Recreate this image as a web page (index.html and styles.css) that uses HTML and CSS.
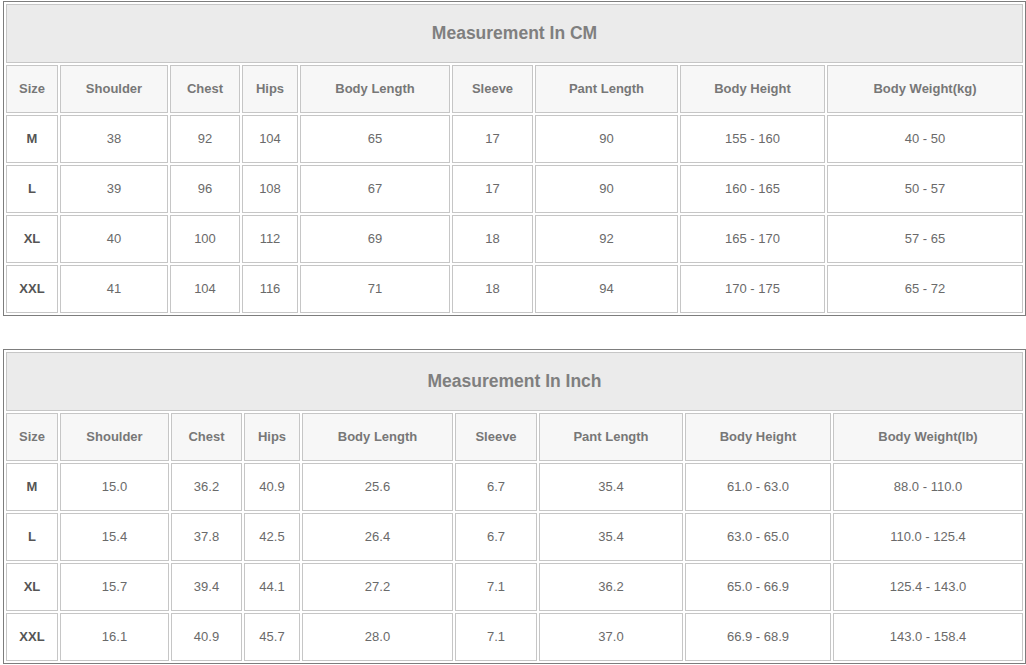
FILE: index.html
```html
<!DOCTYPE html>
<html>
<head>
<meta charset="utf-8">
<title>Size Chart</title>
<link rel="stylesheet" href="styles.css">
</head>
<body>
<div class="chart chart-cm" role="table">
  <div class="title" role="row">Measurement In CM</div>
  <div class="th">Size</div><div class="th">Shoulder</div><div class="th">Chest</div><div class="th">Hips</div><div class="th">Body Length</div><div class="th">Sleeve</div><div class="th">Pant Length</div><div class="th">Body Height</div><div class="th">Body Weight(kg)</div>
  <div class="td size">M</div><div class="td">38</div><div class="td">92</div><div class="td">104</div><div class="td">65</div><div class="td">17</div><div class="td">90</div><div class="td">155 - 160</div><div class="td">40 - 50</div>
  <div class="td size">L</div><div class="td">39</div><div class="td">96</div><div class="td">108</div><div class="td">67</div><div class="td">17</div><div class="td">90</div><div class="td">160 - 165</div><div class="td">50 - 57</div>
  <div class="td size">XL</div><div class="td">40</div><div class="td">100</div><div class="td">112</div><div class="td">69</div><div class="td">18</div><div class="td">92</div><div class="td">165 - 170</div><div class="td">57 - 65</div>
  <div class="td size">XXL</div><div class="td">41</div><div class="td">104</div><div class="td">116</div><div class="td">71</div><div class="td">18</div><div class="td">94</div><div class="td">170 - 175</div><div class="td">65 - 72</div>
</div>
<div class="chart chart-inch" role="table">
  <div class="title" role="row">Measurement In Inch</div>
  <div class="th">Size</div><div class="th">Shoulder</div><div class="th">Chest</div><div class="th">Hips</div><div class="th">Body Length</div><div class="th">Sleeve</div><div class="th">Pant Length</div><div class="th">Body Height</div><div class="th">Body Weight(lb)</div>
  <div class="td size">M</div><div class="td">15.0</div><div class="td">36.2</div><div class="td">40.9</div><div class="td">25.6</div><div class="td">6.7</div><div class="td">35.4</div><div class="td">61.0 - 63.0</div><div class="td">88.0 - 110.0</div>
  <div class="td size">L</div><div class="td">15.4</div><div class="td">37.8</div><div class="td">42.5</div><div class="td">26.4</div><div class="td">6.7</div><div class="td">35.4</div><div class="td">63.0 - 65.0</div><div class="td">110.0 - 125.4</div>
  <div class="td size">XL</div><div class="td">15.7</div><div class="td">39.4</div><div class="td">44.1</div><div class="td">27.2</div><div class="td">7.1</div><div class="td">36.2</div><div class="td">65.0 - 66.9</div><div class="td">125.4 - 143.0</div>
  <div class="td size">XXL</div><div class="td">16.1</div><div class="td">40.9</div><div class="td">45.7</div><div class="td">28.0</div><div class="td">7.1</div><div class="td">37.0</div><div class="td">66.9 - 68.9</div><div class="td">143.0 - 158.4</div>
</div>
</body>
</html>
```

FILE: styles.css
```css
html, body {
  margin: 0;
  padding: 0;
  background: #ffffff;
}

body {
  font-family: "Liberation Sans", Arial, sans-serif;
  font-size: 13px;
  color: #666666;
}

.chart {
  box-sizing: border-box;
  width: 1023px;
  margin: 1px 0 0 3px;
  border: 1px solid #7d7d7d;
  padding: 2px;
  display: grid;
  gap: 2px;
  grid-template-rows: 59px repeat(5, 48px);
}

.chart-cm {
  grid-template-columns: 52px 108px 70px 56px 150px 81px 143px 145px 196px;
}

.chart-inch {
  margin-top: 33px;
  grid-template-columns: 52px 109px 71px 56px 151px 82px 144px 146px 190px;
}

.title,
.th,
.td {
  box-sizing: border-box;
  border: 1px solid #c6c6c6;
  display: flex;
  align-items: center;
  justify-content: center;
  white-space: nowrap;
}

.th,
.td {
  padding-bottom: 2px;
}

.title {
  grid-column: 1 / -1;
  background: #ebebeb;
  color: #7f7f7f;
  font-weight: bold;
  font-size: 17.5px;
}

.th {
  background: #f7f7f7;
  color: #777777;
  font-weight: bold;
}

.td {
  background: #ffffff;
  color: #6a6a6a;
}

.td.size {
  font-weight: bold;
  color: #555555;
}
```
